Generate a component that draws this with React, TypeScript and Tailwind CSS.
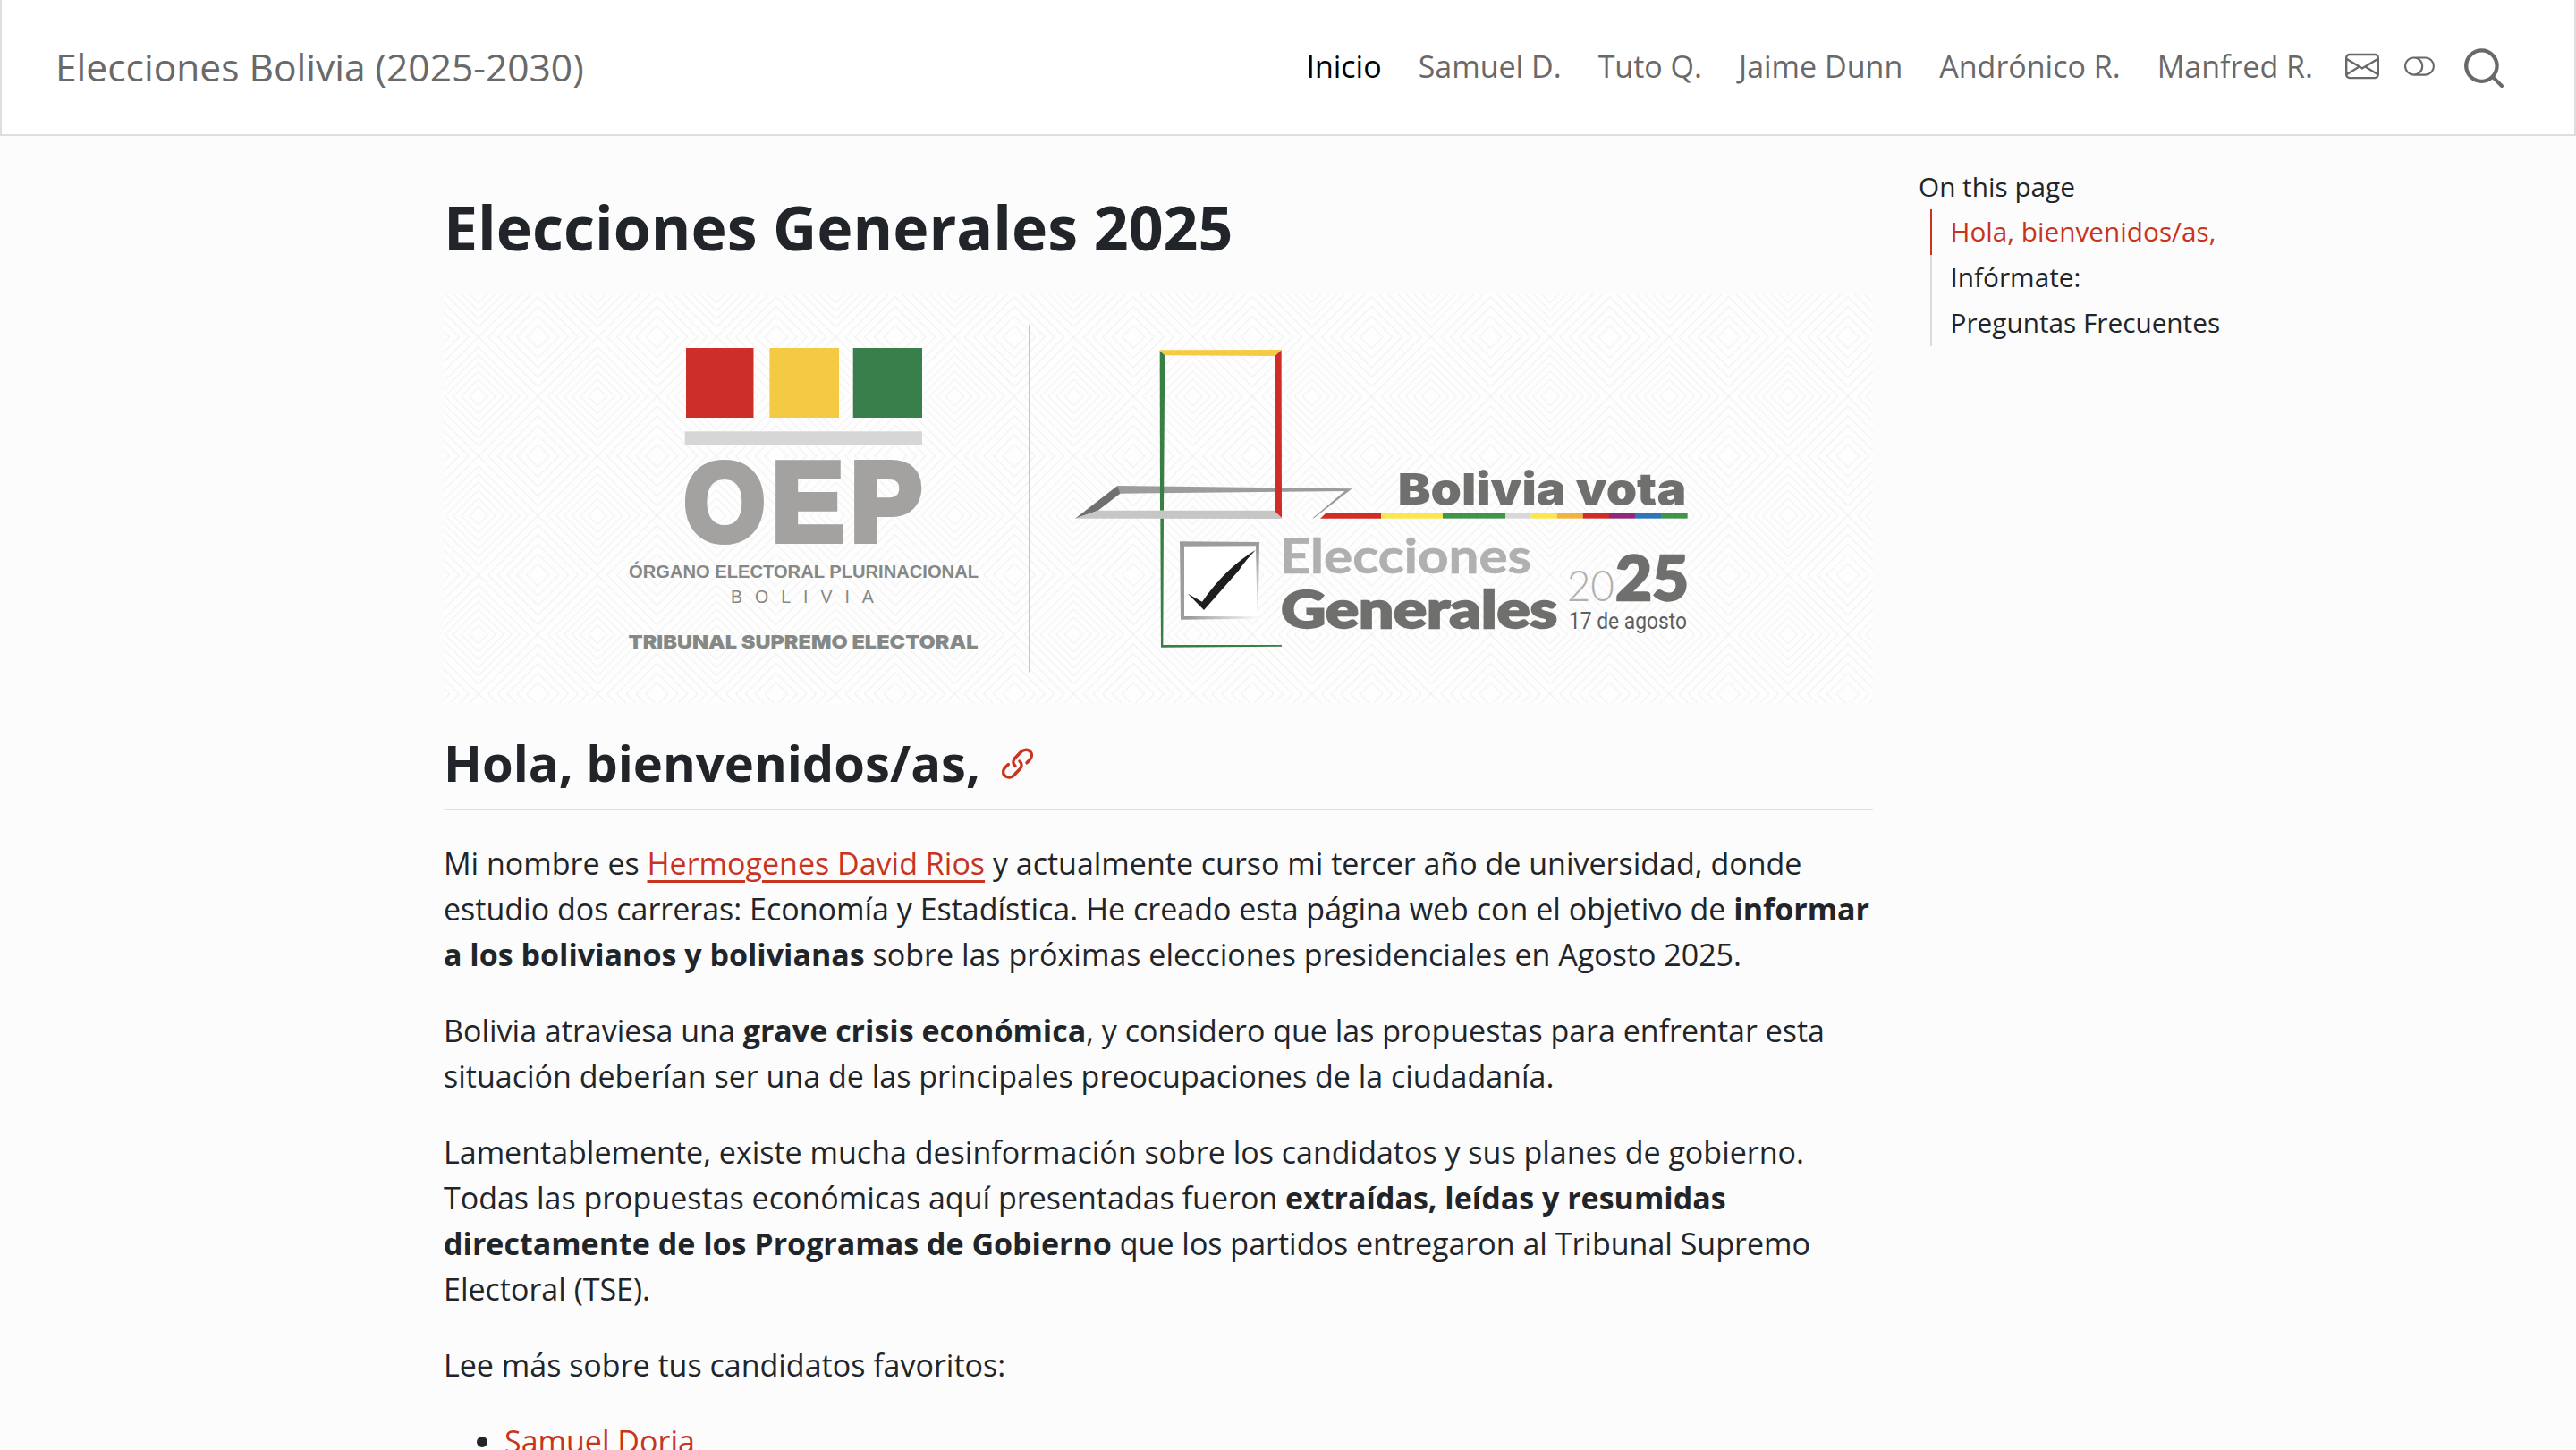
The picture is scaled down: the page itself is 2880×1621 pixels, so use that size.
import { BsEnvelope, BsToggleOff } from "react-icons/bs";

const ringsA = [12.7, 23.4, 34.2, 45, 55.7, 66.5];
const ringsB = [10.3, 19.3, 28.3, 37.3, 46.3, 55.4];
const diamond = (x: number, y: number, r: number) => `M${x - r} ${y}L${x} ${y - r}L${x + r} ${y}L${x} ${y + r}Z`;
const corners = [[0, 0], [133.13, 0], [0, 133], [133.13, 133]];
const patternPath =
  corners.map(([x, y]) => ringsA.map((r) => diamond(x, y, r)).join("")).join("") +
  ringsB.map((r) => diamond(66.56, 66.5, r)).join("");

const stripes: [number, number, string][] = [
  [432, 639, "#fae74b"],
  [639, 849, "#3f9648"],
  [849, 935, "#d8d8d8"],
  [935, 1022, "#fae74b"],
  [1022, 1109, "#efb43c"],
  [1109, 1197, "#d02d27"],
  [1197, 1284, "#92287a"],
  [1284, 1371, "#2f75bb"],
  [1371, 1460, "#3f9648"],
];

function Fit(p: { x: number; y: number; w: number; size: number; fill: string; family: string; weight?: number; stroke?: number; children: string }) {
  return (
    <text x={p.x} y={p.y} textLength={p.w} lengthAdjust="spacingAndGlyphs" fontSize={p.size} fill={p.fill} fontFamily={p.family} fontWeight={p.weight ?? 400} stroke={p.stroke ? p.fill : "none"} strokeWidth={p.stroke ?? 0}>
      {p.children}
    </text>
  );
}

function Banner() {
  const arial = "'Liberation Sans', sans-serif";
  const lato = "Lato, sans-serif";
  const inter = "Inter, sans-serif";
  return (
    <svg className="block h-[457px] w-[1598px]" viewBox="496 329 1598 457" role="img">
      <defs>
        <pattern id="rombos" x="601.4" y="376.7" width="133.13" height="133" patternUnits="userSpaceOnUse">
          <path d={patternPath} fill="none" stroke="#efefef" strokeWidth="1" />
        </pattern>
        <linearGradient id="marco" x1="0.55" y1="0.55" x2="1" y2="1">
          <stop offset="0" stopColor="#9c9c9c" />
          <stop offset="1" stopColor="#ffffff" />
        </linearGradient>
      </defs>
      <rect x="496" y="329" width="1598" height="457" fill="#fefefe" />
      <rect x="496" y="329" width="1598" height="457" fill="url(#rombos)" />
      <rect x="767" y="389" width="75.5" height="78" fill="#cd2e29" />
      <rect x="860.4" y="389" width="77.6" height="78" fill="#f4c944" />
      <rect x="953.7" y="389" width="77.3" height="78" fill="#397f4b" />
      <rect x="765.7" y="482.3" width="265.3" height="15.4" fill="#d6d6d6" />
      <Fit x={765} y={603.5} w={90} size={122} fill="#a3a2a0" family={arial} weight={700} stroke={8}>O</Fit>
      <Fit x={863} y={604} w={80} size={124} fill="#a3a2a0" family={arial} weight={700} stroke={8}>E</Fit>
      <Fit x={951} y={604} w={79.5} size={124} fill="#a3a2a0" family={arial} weight={700} stroke={8}>P</Fit>
      <Fit x={703} y={646} w={391} size={19.6} fill="#868886" family={arial} weight={700}>ÓRGANO ELECTORAL PLURINACIONAL</Fit>
      <text x="817" y="674" fontSize="19.5" letterSpacing="14" fill="#868886" fontFamily={arial}>BOLIVIA</text>
      <Fit x={702.5} y={725} w={391} size={20.6} fill="#868886" family={inter} weight={900}>TRIBUNAL SUPREMO ELECTORAL</Fit>
      <rect x="1150.3" y="363" width="1.5" height="388.6" fill="#b0b0b0" />
      <g transform="translate(1140 340) scale(0.33333)">
        <path d="M328 609L1115 619L987 718L984 716L1090 627L335 635Z" fill="#9c9c9c" />
        <path d="M328 609L337 635L263 692L186 719Z" fill="#70706e" />
        <path d="M470 156L487 171L483 692H471Z" fill="#397f43" />
        <path d="M472 718H483L481 1143H879V1148L474 1151Z" fill="#397f43" />
        <path d="M263 692H857L879 720L186 719Z" fill="#c6c6c4" />
        <path d="M470 154L878 153L857 174L487 172Z" fill="#f6cb42" />
        <path d="M878 154L879 717L855 694L857 173Z" fill="#d02d27" />
        <path d="M537 796L804 798L800 1055L540 1058Z" fill="url(#marco)" />
        <path d="M552 812L792 811L797 1048L552 1047Z" fill="#ffffff" />
        <path d="M564 971L612 998Q690 885 792 824Q758 858 735 893L618 1026Z" fill="#1e1e1c" />
      </g>
      <g transform="translate(1400 480) scale(0.33333)">
        <path d="M228 299L246 282H432V299Z" fill="#d02d27" />
        {stripes.map(([a, b, c]) => (
          <rect key={a} x={a} y={282} width={b - a} height={17} fill={c} />
        ))}
        <Fit x={488} y={251} w={968} size={146} fill="#6f6f6d" family={inter} weight={900}>Bolivia vota</Fit>
        <Fit x={92} y={483} w={844} size={163} fill="#b0b0b0" family={lato} weight={700} stroke={2}>Elecciones</Fit>
        <Fit x={97} y={667} w={926} size={172} fill="#6f6f6d" family={lato} weight={900} stroke={7}>Generales</Fit>
        <Fit x={1055} y={575} w={160} size={143} fill="#b0b0b0" family={lato} weight={300}>20</Fit>
        <Fit x={1218} y={572} w={246} size={204} fill="#6f6f6d" family={lato} weight={900} stroke={7}>25</Fit>
        <Fit x={1062} y={670} w={396} size={80} fill="#5f5f5f" family="Roboto, sans-serif">17 de agosto</Fit>
      </g>
    </svg>
  );
}

const nav = ["Inicio", "Samuel D.", "Tuto Q.", "Jaime Dunn", "Andrónico R.", "Manfred R."];
const toc = ["Hola, bienvenidos/as,", "Infórmate:", "Preguntas Frecuentes"];

export default function App() {
  return (
    <div className="h-[1621px] overflow-hidden bg-[#fcfcfc] font-['Open_Sans',sans-serif] text-[34px] leading-[51px] text-[#212529]">
      <header className="flex h-[152px] items-center border-x-2 border-b-2 border-[#dedede] bg-white pr-[79px] pl-[60px] text-[#696969]">
        <a className="pb-[2px] text-[42.5px] whitespace-nowrap">Elecciones Bolivia (2025-2030)</a>
        <nav className="ml-auto flex items-center gap-[41px] pb-[2px]">
          {nav.map((n, i) => (
            <a key={n} className={i === 0 ? "whitespace-nowrap text-black" : "whitespace-nowrap"}>{n}</a>
          ))}
        </nav>
        <BsEnvelope className="mb-[2px] ml-[36px] size-[38px]" />
        <BsToggleOff className="mb-[2px] ml-[28px] size-[34px]" />
        <svg className="mt-[2px] ml-[33px] size-[44px]" viewBox="0 0 44 44" fill="none" stroke="currentColor" strokeLinecap="round">
          <circle cx="19.4" cy="19.6" r="17.2" strokeWidth="4.3" />
          <path d="M33 33L42 42" strokeWidth="4" />
        </svg>
      </header>
      <div className="flex pl-[496px]">
        <main className="w-[1598px] shrink-0">
          <h1 className="mt-[61px] mb-[34px] text-[68px] leading-[82px] font-bold">Elecciones Generales 2025</h1>
          <Banner />
          <h2 className="mt-[33px] flex h-[87px] items-start border-b-2 border-[#dee2e6] text-[56.1px] leading-[67px] font-bold">
            Hola, bienvenidos/as,
            <svg className="mt-[16px] ml-[23px] size-[37.3px] text-[#c9341f]" viewBox="86 60 112 112" fill="none" stroke="currentColor" strokeWidth="10.5" strokeLinecap="round">
              <path d="M134 124C126 117 126 106 133 98L152 78C160 69 175 67 184 75C192 84 190 96 182 104L173 113" />
              <path d="M149 108C157 115 157 126 150 134L131 154C123 163 108 165 99 157C91 148 93 136 101 128L111 119" />
            </svg>
          </h2>
          <div className="mt-[34px] space-y-[34px]">
            <p>
              Mi nombre es <a className="text-[#c9341f] underline decoration-[3px] underline-offset-[6px]">Hermogenes David Rios</a> y actualmente curso mi tercer año de universidad, donde estudio dos carreras: Economía y Estadística. He creado esta página web con el objetivo de <strong>informar a los bolivianos y bolivianas</strong> sobre las próximas elecciones presidenciales en Agosto 2025.
            </p>
            <p>
              Bolivia atraviesa una <strong>grave crisis económica</strong>, y considero que las propuestas para enfrentar esta situación deberían ser una de las principales preocupaciones de la ciudadanía.
            </p>
            <p>
              Lamentablemente, existe mucha desinformación sobre los candidatos y sus planes de gobierno. Todas las propuestas económicas aquí presentadas fueron <strong>extraídas, leídas y resumidas directamente de los Programas de Gobierno</strong> que los partidos entregaron al Tribunal Supremo Electoral (TSE).
            </p>
            <p>Lee más sobre tus candidatos favoritos:</p>
            <ul className="list-disc pl-[68px]">
              <li><a className="text-[#c9341f] underline decoration-[3px] underline-offset-[6px]">Samuel Doria</a></li>
            </ul>
          </div>
        </main>
        <aside className="ml-[51px] pt-[32px] text-[29.75px] leading-[49px]">
          <h2 className="pb-px">On this page</h2>
          <ul className="ml-[13px]">
            {toc.map((t, i) => (
              <li key={t} className={i === 0 ? "border-l-2 border-[#c9341f] pb-[2px] pl-[20.5px] text-[#c9341f]" : "border-l-2 border-[#dcdcdc] pb-[2px] pl-[20.5px]"}>{t}</li>
            ))}
          </ul>
        </aside>
      </div>
    </div>
  );
}
